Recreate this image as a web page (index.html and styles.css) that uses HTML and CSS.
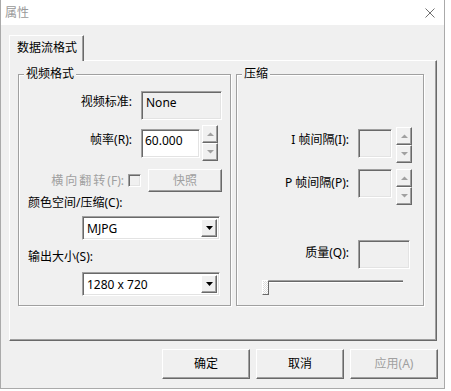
FILE: index.html
```html
<!DOCTYPE html>
<html lang="zh-CN">
<head>
  <meta charset="UTF-8">
  <title>属性</title>
  <link rel="stylesheet" href="styles.css">
</head>
<body>

  <div class="window">
    <div class="titlebar">
      <span class="title">属性</span>
      <svg class="close" width="10" height="10" viewBox="0 0 10 10">
        <path d="M0.5 0.5L9.5 9.5M9.5 0.5L0.5 9.5" stroke="#707070" stroke-width="1" fill="none"/>
      </svg>
    </div>

    <div class="client">
      <div class="tabs">
        <div class="tab">数据流格式</div>
      </div>

      <div class="panel">
        <!-- left group -->
        <div class="group group-video">
          <span class="legend">视频格式</span>

          <div class="row row-std">
            <span class="lbl">视频标准:</span>
            <div class="edit edit-std">None</div>
          </div>

          <div class="row row-fps">
            <span class="lbl">帧率(R):</span>
            <div class="edit edit-white edit-fps">60.000</div>
            <div class="spin">
              <div class="spin-btn"><svg width="7" height="4"><polygon points="0,4 7,4 3.5,0.5" fill="#a0a0a0"/></svg></div>
              <div class="spin-btn"><svg width="7" height="4"><polygon points="0,0 7,0 3.5,3.5" fill="#a0a0a0"/></svg></div>
            </div>
          </div>

          <div class="row row-flip">
            <span class="lbl lbl-flip disabled"><span class="wide">横向翻转</span>(F):</span>
            <span class="check"></span>
            <div class="btn btn-snap disabled">快照</div>
          </div>

          <div class="caption caption-csp">颜色空间/压缩(C):</div>
          <div class="combo combo-csp">
            <span class="combo-text">MJPG</span>
            <span class="combo-btn"><svg width="7" height="4"><polygon points="0,0 7,0 3.5,4" fill="#000"/></svg></span>
          </div>

          <div class="caption caption-size">输出大小(S):</div>
          <div class="combo combo-size">
            <span class="combo-text">1280 x 720</span>
            <span class="combo-btn"><svg width="7" height="4"><polygon points="0,0 7,0 3.5,4" fill="#000"/></svg></span>
          </div>
        </div>

        <!-- right group -->
        <div class="group group-comp">
          <span class="legend">压缩</span>

          <div class="row row-i">
            <span class="lbl lbl-r">I 帧间隔(I):</span>
            <div class="edit edit-small"></div>
            <div class="spin spin-r">
              <div class="spin-btn"><svg width="7" height="4"><polygon points="0,4 7,4 3.5,0.5" fill="#a0a0a0"/></svg></div>
              <div class="spin-btn"><svg width="7" height="4"><polygon points="0,0 7,0 3.5,3.5" fill="#a0a0a0"/></svg></div>
            </div>
          </div>

          <div class="row row-p">
            <span class="lbl lbl-r">P 帧间隔(P):</span>
            <div class="edit edit-small"></div>
            <div class="spin spin-r">
              <div class="spin-btn"><svg width="7" height="4"><polygon points="0,4 7,4 3.5,0.5" fill="#a0a0a0"/></svg></div>
              <div class="spin-btn"><svg width="7" height="4"><polygon points="0,0 7,0 3.5,3.5" fill="#a0a0a0"/></svg></div>
            </div>
          </div>

          <div class="row row-q">
            <span class="lbl lbl-r">质量(Q):</span>
            <div class="edit edit-q"></div>
          </div>

          <div class="slider">
            <div class="track"></div>
            <div class="thumb"></div>
          </div>
        </div>
      </div>

      <div class="buttons">
        <div class="btn btn-dlg">确定</div>
        <div class="btn btn-dlg">取消</div>
        <div class="btn btn-dlg disabled">应用(A)</div>
      </div>
    </div>
  </div>

</body>
</html>
```

FILE: styles.css
```css
* {
  box-sizing: border-box;
}
body {
  margin: 0;
  background: #fff;
  font-family: "Noto Sans", "Noto Sans CJK SC", sans-serif;
  font-size: 12px;
  line-height: 16px;
  color: #000;
}
.window {
  width: 445px;
  height: 389px;
  border: 1px solid #aaa;
  border-top: 0;
  background: #f0f0f0;
}
.titlebar {
  height: 25px;
  background: #fff;
  display: flex;
  align-items: center;
  justify-content: space-between;
  padding: 0 9px 0 4px;
}
.title {
  color: #999;
}
.client {
  padding: 10px 6px 0 8px;
}
.tabs {
  display: flex;
}
.tab {
  position: relative;
  z-index: 1;
  width: 75px;
  height: 26px;
  margin-bottom: -1px;
  padding: 4px 0 0 7px;
  border: 1px solid;
  border-color: #fff #696969 transparent #fff;
  border-bottom: 0;
  box-shadow: inset -1px 0 0 #a0a0a0;
  background: #f0f0f0;
}
.panel {
  width: 428px;
  height: 281px;
  display: flex;
  gap: 5px;
  padding: 13px 0 0 8px;
  border: 1px solid;
  border-color: #fff #696969 #696969 #fff;
  box-shadow: inset -1px -1px 0 #a0a0a0;
}
.group {
  position: relative;
  height: 232px;
  border: 1px solid #a0a0a0;
  box-shadow: inset 1px 1px 0 #fff, 1px 1px 0 #fff;
}
.group-video {
  width: 213px;
  padding-top: 16px;
}
.group-comp {
  width: 188px;
}
.legend {
  position: absolute;
  top: -9px;
  left: 5px;
  padding: 0 2px;
  background: #f0f0f0;
}
.row {
  display: flex;
  align-items: flex-start;
}
.lbl {
  width: 113px;
  margin-right: 9px;
  text-align: right;
  white-space: nowrap;
}
.disabled {
  color: #a0a0a0;
}

/* sunken boxes */
.edit, .combo, .check {
  border: 1px solid;
  border-color: #a0a0a0 #fff #fff #a0a0a0;
  box-shadow: inset 1px 1px 0 #696969, inset -1px -1px 0 #e3e3e3;
}
.edit {
  height: 29px;
  padding: 3px 4px 0 4px;
  background: #f0f0f0;
}
.edit-white {
  background: #fff;
}

/* raised things */
.btn, .spin-btn, .combo-btn {
  border: 1px solid;
  border-color: #fff #696969 #696969 #fff;
  box-shadow: inset -1px -1px 0 #a0a0a0;
  background: #f0f0f0;
  display: flex;
  align-items: center;
  justify-content: center;
}
.spin {
  display: flex;
  flex-direction: column;
  width: 16px;
  height: 36px;
  margin-left: 2px;
}
.spin-btn {
  flex: 1;
}
.spin-btn svg, .combo-btn svg {
  display: block;
}

.row-std .lbl {
  margin-top: 3px;
}
.edit-std {
  width: 81px;
}
.row-fps {
  margin-top: 5px;
}
.row-fps .lbl {
  margin-top: 7px;
}
.edit-fps {
  width: 59px;
  margin-top: 4px;
  padding-left: 3px;
}
.row-flip {
  margin-top: 8px;
  height: 23px;
  align-items: center;
}
.lbl-flip {
  width: 105px;
  margin-right: 4px;
}
.wide {
  letter-spacing: 2px;
}
.check {
  width: 13px;
  height: 13px;
  margin-right: 7px;
  background: #f0f0f0;
}
.btn-snap {
  width: 74px;
  height: 23px;
}
.caption {
  padding-left: 9px;
}
.caption-csp {
  margin-top: 3px;
}
.caption-size {
  margin-top: 9px;
}
.combo {
  display: flex;
  width: 138px;
  height: 24px;
  margin-left: 63px;
  padding: 2px;
  background: #fff;
}
.combo-csp {
  margin-top: 5px;
}
.combo-size {
  margin-top: 7px;
}
.combo-text {
  flex: 1;
  padding-left: 2px;
  line-height: 20px;
}
.combo-btn {
  width: 16px;
}

/* compression group */
.lbl-r {
  width: 112px;
}
.row-i {
  margin-top: 52px;
}
.row-i .lbl {
  margin-top: 5px;
}
.row-i .edit {
  margin-top: 2px;
}
.row-p {
  margin-top: 6px;
}
.row-p .lbl {
  margin-top: 6px;
}
.edit-small {
  width: 34px;
}
.spin-r {
  margin-left: 4px;
}
.row-q {
  margin-top: 35px;
}
.row-q .lbl {
  margin-top: 5px;
}
.edit-q {
  width: 52px;
}
.slider {
  position: relative;
  width: 140px;
  height: 15px;
  margin: 11px 0 0 26px;
}
.track {
  margin-top: 5px;
  height: 3px;
  border-top: 1px solid #a0a0a0;
  border-bottom: 1px solid #fff;
  background: #696969;
}
.thumb {
  position: absolute;
  top: 0;
  left: -1px;
  width: 7px;
  height: 15px;
  border: 1px solid;
  border-color: #fff #696969 #696969 #fff;
  background: repeating-conic-gradient(#fff 0 25%, #dcdcdc 0 50%) 0 0 / 2px 2px;
}

.buttons {
  display: flex;
  justify-content: flex-end;
  gap: 6px;
  margin-top: 8px;
}
.btn-dlg {
  width: 88px;
  height: 30px;
}
```
